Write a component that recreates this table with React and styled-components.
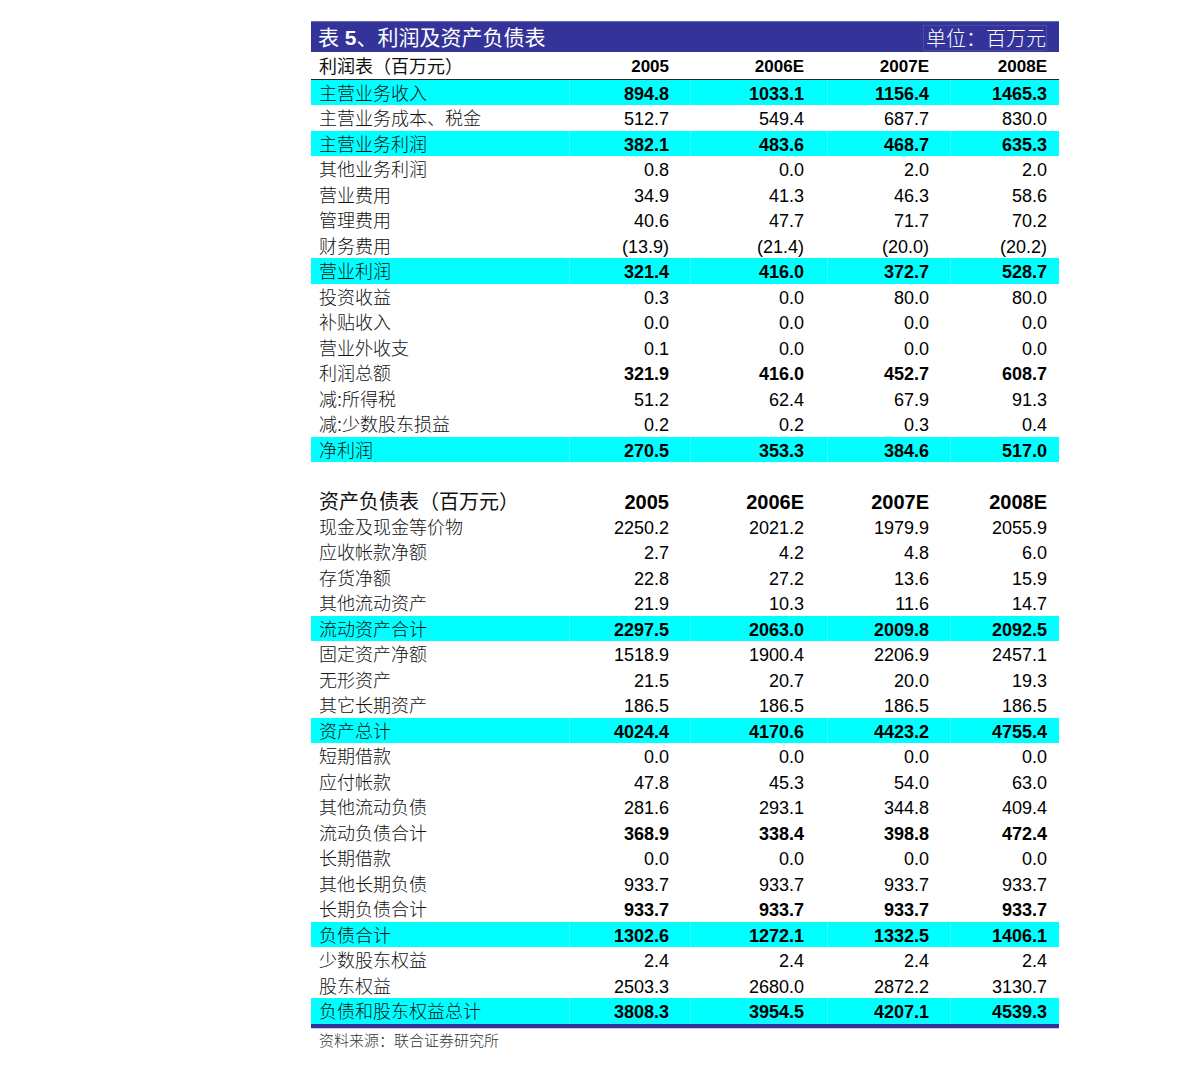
import React from "react";
import styled, { createGlobalStyle } from "styled-components";

const Global = createGlobalStyle`
  html, body { margin: 0; padding: 0; background: #fff; }
  body { font-family: "Liberation Sans", "Noto Sans CJK SC", sans-serif; color: #000; }
`;

const Page = styled.div`
  padding: 21px 0 20px 311px;
  width: 748px;
`;

const TitleBand = styled.div`
  height: 31px;
  background: #333399;
  border-top: 1px solid #6a6ab8;
  display: flex;
  align-items: center;
  justify-content: space-between;
  padding: 1px 12px 0 7px;
  color: #fff;
  box-sizing: border-box;
`;

const Title = styled.div`
  font-family: "Liberation Sans", "Noto Sans CJK SC", sans-serif;
  font-size: 21px;
  line-height: 28px;
  font-weight: 400;
  b { font-weight: 700; }
`;

const Unit = styled.div`
  font-family: "Noto Sans CJK SC", sans-serif;
  font-size: 20px;
  line-height: 24px;
  font-weight: 300;
  padding: 0 0 0 2px;
  border: 1px solid rgba(255, 255, 255, 0.12);
`;

const COLS = "258px 121px 137px 123px 109px";

const Row = styled.div`
  display: grid;
  grid-template-columns: ${COLS};
  height: ${(p) => p.$h || "25.5px"};
  align-items: center;
  background: ${(p) => (p.$hl ? "#00ffff" : "transparent")};
  border-bottom: ${(p) => (p.$rule ? "1.5px solid #222" : "none")};
  box-sizing: border-box;
`;

const Label = styled.div`
  font-family: "Liberation Sans", "Noto Sans CJK SC", sans-serif;
  font-size: ${(p) => p.$size || "18px"};
  font-weight: ${(p) => p.$weight || 300};
  color: #111;
  padding: 3px 0 0 8px;
  line-height: 22px;
  white-space: nowrap;
  height: 100%;
  display: flex;
  align-items: center;
  box-sizing: border-box;
`;

const pads = [21, 23, 21, 12];

const Num = styled.div`
  font-family: "Liberation Sans", Arial, sans-serif;
  font-size: ${(p) => p.$size || "18px"};
  font-weight: ${(p) => (p.$bold ? 700 : 400)};
  text-align: right;
  padding-top: 3px;
  padding-right: ${(p) => pads[p.$i]}px;
  line-height: 22px;
  height: 100%;
  display: flex;
  align-items: center;
  justify-content: flex-end;
  border-left: 1px solid ${(p) => (p.$hl ? "rgba(255,255,255,0.22)" : "transparent")};
  box-sizing: border-box;
`;

const Spacer = styled.div`
  height: 24.5px;
`;

const BottomRule = styled.div`
  height: 4px;
  background: #333399;
  border-bottom: 1px solid #c8c8e0;
`;

const Source = styled.div`
  font-family: "Noto Sans CJK SC", sans-serif;
  font-size: 15px;
  font-weight: 300;
  color: #333;
  padding: 1px 0 0 8px;
  line-height: 20px;
`;

const income = [
  ["主营业务收入", ["894.8", "1033.1", "1156.4", "1465.3"], true, true],
  ["主营业务成本、税金", ["512.7", "549.4", "687.7", "830.0"]],
  ["主营业务利润", ["382.1", "483.6", "468.7", "635.3"], true, true],
  ["其他业务利润", ["0.8", "0.0", "2.0", "2.0"]],
  ["营业费用", ["34.9", "41.3", "46.3", "58.6"]],
  ["管理费用", ["40.6", "47.7", "71.7", "70.2"]],
  ["财务费用", ["(13.9)", "(21.4)", "(20.0)", "(20.2)"]],
  ["营业利润", ["321.4", "416.0", "372.7", "528.7"], true, true],
  ["投资收益", ["0.3", "0.0", "80.0", "80.0"]],
  ["补贴收入", ["0.0", "0.0", "0.0", "0.0"]],
  ["营业外收支", ["0.1", "0.0", "0.0", "0.0"]],
  ["利润总额", ["321.9", "416.0", "452.7", "608.7"], false, true],
  ["减:所得税", ["51.2", "62.4", "67.9", "91.3"]],
  ["减:少数股东损益", ["0.2", "0.2", "0.3", "0.4"]],
  ["净利润", ["270.5", "353.3", "384.6", "517.0"], true, true],
];

const balance = [
  ["现金及现金等价物", ["2250.2", "2021.2", "1979.9", "2055.9"]],
  ["应收帐款净额", ["2.7", "4.2", "4.8", "6.0"]],
  ["存货净额", ["22.8", "27.2", "13.6", "15.9"]],
  ["其他流动资产", ["21.9", "10.3", "11.6", "14.7"]],
  ["流动资产合计", ["2297.5", "2063.0", "2009.8", "2092.5"], true, true],
  ["固定资产净额", ["1518.9", "1900.4", "2206.9", "2457.1"]],
  ["无形资产", ["21.5", "20.7", "20.0", "19.3"]],
  ["其它长期资产", ["186.5", "186.5", "186.5", "186.5"]],
  ["资产总计", ["4024.4", "4170.6", "4423.2", "4755.4"], true, true],
  ["短期借款", ["0.0", "0.0", "0.0", "0.0"]],
  ["应付帐款", ["47.8", "45.3", "54.0", "63.0"]],
  ["其他流动负债", ["281.6", "293.1", "344.8", "409.4"]],
  ["流动负债合计", ["368.9", "338.4", "398.8", "472.4"], false, true],
  ["长期借款", ["0.0", "0.0", "0.0", "0.0"]],
  ["其他长期负债", ["933.7", "933.7", "933.7", "933.7"]],
  ["长期负债合计", ["933.7", "933.7", "933.7", "933.7"], false, true],
  ["负债合计", ["1302.6", "1272.1", "1332.5", "1406.1"], true, true],
  ["少数股东权益", ["2.4", "2.4", "2.4", "2.4"]],
  ["股东权益", ["2503.3", "2680.0", "2872.2", "3130.7"]],
  ["负债和股东权益总计", ["3808.3", "3954.5", "4207.1", "4539.3"], true, true],
];

const years = ["2005", "2006E", "2007E", "2008E"];

function DataRow({ label, values, hl, bold }) {
  return (
    <Row $hl={hl}>
      <Label>{label}</Label>
      {values.map((v, i) => (
        <Num key={i} $i={i} $bold={bold} $hl={hl}>
          {v}
        </Num>
      ))}
    </Row>
  );
}

export default function App() {
  return (
    <>
      <Global />
      <Page>
        <TitleBand>
          <Title>
            表 <b>5</b>、利润及资产负债表
          </Title>
          <Unit>单位：百万元</Unit>
        </TitleBand>
        <Row $h="27.5px" $rule>
          <Label $weight={400}>利润表（百万元）</Label>
          {years.map((y, i) => (
            <Num key={y} $i={i} $bold $size="17px">
              {y}
            </Num>
          ))}
        </Row>
        {income.map(([l, v, hl, b]) => (
          <DataRow key={l} label={l} values={v} hl={hl} bold={b} />
        ))}
        <Spacer />
        <Row $h="27px">
          <Label $size="20px" $weight={400}>资产负债表（百万元）</Label>
          {years.map((y, i) => (
            <Num key={y} $i={i} $bold $size="20px">
              {y}
            </Num>
          ))}
        </Row>
        {balance.map(([l, v, hl, b]) => (
          <DataRow key={l} label={l} values={v} hl={hl} bold={b} />
        ))}
        <BottomRule />
        <Source>资料来源：联合证券研究所</Source>
      </Page>
    </>
  );
}
